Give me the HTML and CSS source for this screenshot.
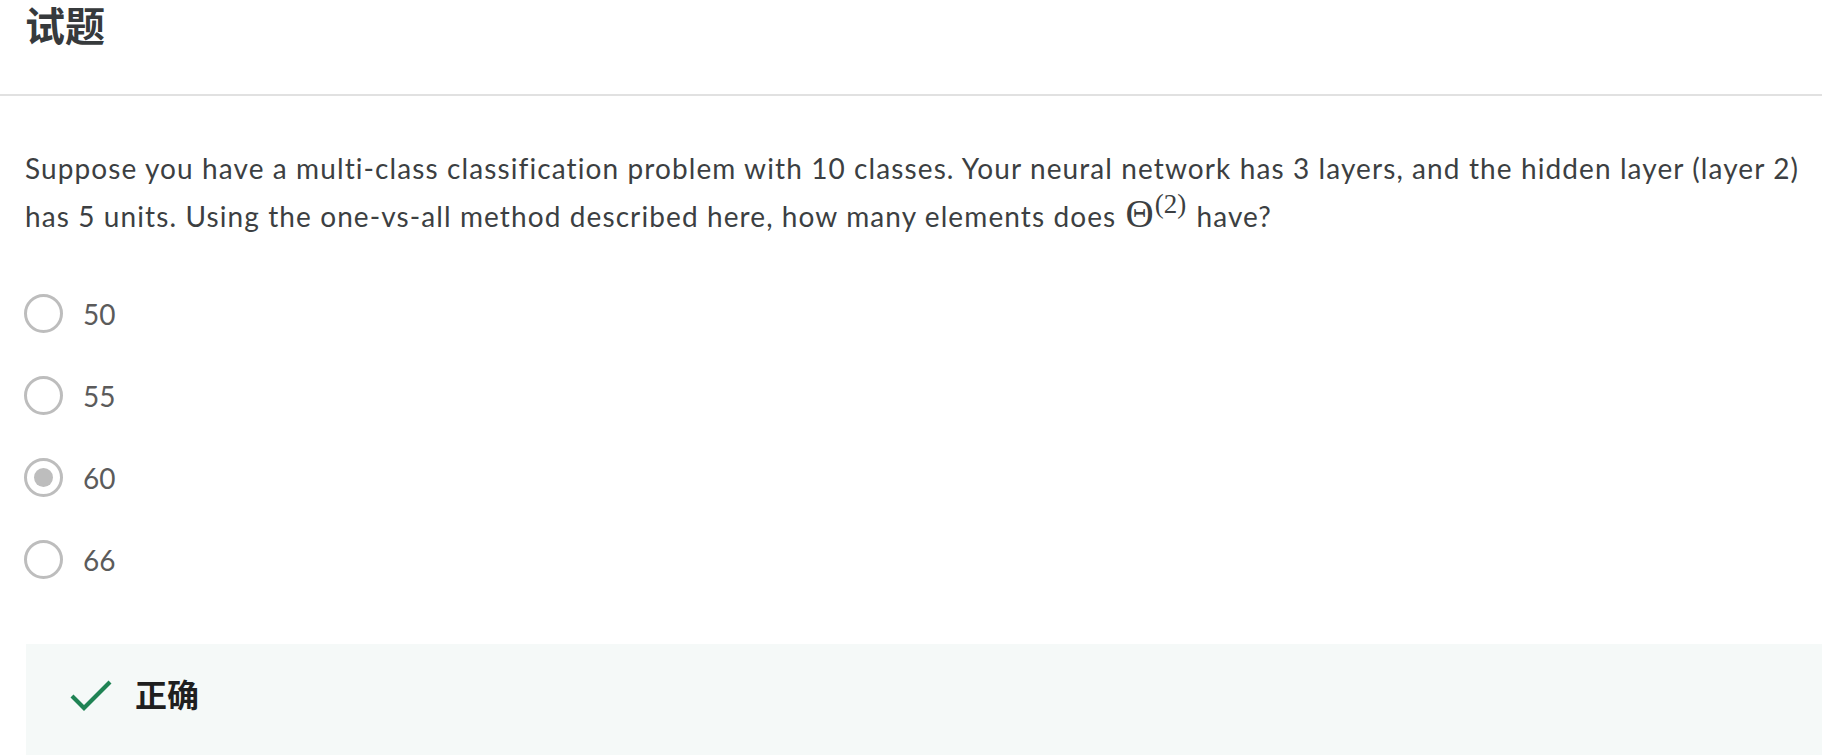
FILE: index.html
```html
<!DOCTYPE html>
<html lang="zh">
<head>
<meta charset="utf-8">
<title>试题</title>
<link rel="stylesheet" href="styles.css">
</head>
<body>
<header class="page-header">
  <h1 class="title">试题</h1>
</header>
<main class="content">
  <p class="question">Suppose you have a multi-class classification problem with 10 classes. Your neural network has 3 layers, and the hidden layer (layer 2) has 5 units. Using the one-vs-all method described here, how many elements does <span class="math"><span class="theta">Θ</span><sup class="sup">(2)</sup></span> have?</p>
  <ul class="options">
    <li class="option"><span class="radio"></span><span class="label">50</span></li>
    <li class="option"><span class="radio"></span><span class="label">55</span></li>
    <li class="option"><span class="radio checked"></span><span class="label">60</span></li>
    <li class="option"><span class="radio"></span><span class="label">66</span></li>
  </ul>
  <section class="feedback">
    <svg class="check" width="44" height="34" viewBox="0 0 44 34" aria-hidden="true">
      <polyline points="3,18 15,30 41,4" fill="none" stroke="#1f8354" stroke-width="4.2"/>
    </svg>
    <span class="feedback-text">正确</span>
  </section>
</main>
</body>
</html>
```
FILE: styles.css
```css
html, body {
  margin: 0;
  padding: 0;
  background: #ffffff;
  overflow: hidden;
}
body {
  font-family: Lato, "Noto Sans CJK SC", sans-serif;
  color: #373a3c;
}
.page-header {
  height: 94px;
  border-bottom: 2px solid #e1e1e1;
  padding: 0 0 0 25px;
  box-sizing: content-box;
}
.title {
  margin: 0;
  padding-top: 2px;
  font-family: "Noto Sans CJK SC", sans-serif;
  font-size: 40px;
  line-height: 44px;
  font-weight: 700;
  color: #373a3c;
}
.content {
  padding: 0 0 0 24px;
}
.question {
  margin: 48px 0 0 0;
  padding-left: 1px;
  width: 1790px;
  font-size: 28px;
  letter-spacing: 1.1px;
  font-variant-ligatures: none;
  line-height: 48px;
  color: #3c3f42;
}
.math {
  white-space: nowrap;
  letter-spacing: 0;
  line-height: 0;
  margin-left: 1px;
  margin-right: 2px;
}
.theta {
  font-family: "Liberation Serif", serif;
  font-size: 39px;
  line-height: 0;
}
.sup {
  font-family: "Liberation Serif", serif;
  font-size: 27px;
  line-height: 0;
  vertical-align: 14px;
  margin-left: 1px;
}
.options {
  list-style: none;
  margin: 54px 0 0 0;
  padding: 0;
  display: flex;
  flex-direction: column;
  gap: 43px;
}
.option {
  display: flex;
  align-items: center;
  gap: 20px;
  height: 39px;
}
.radio {
  width: 39px;
  height: 39px;
  box-sizing: border-box;
  border: 3px solid #bdbdbd;
  border-radius: 50%;
  display: flex;
  align-items: center;
  justify-content: center;
  flex: none;
}
.radio.checked::after {
  content: "";
  width: 19px;
  height: 19px;
  border-radius: 50%;
  background: #bdbdbd;
}
.label {
  font-size: 28px;
  color: #5b5b5b;
}
.feedback {
  margin: 65px 0 0 2px;
  background: #f5f9f8;
  height: 140px;
  display: flex;
  align-items: flex-start;
  padding: 30px 0 0 43px;
  gap: 22px;
}
.check {
  display: block;
  margin-top: 4px;
}
.feedback-text {
  font-family: "Noto Sans CJK SC", sans-serif;
  font-size: 32px;
  line-height: 38px;
  font-weight: 700;
  color: #1f1f1f;
}
```
